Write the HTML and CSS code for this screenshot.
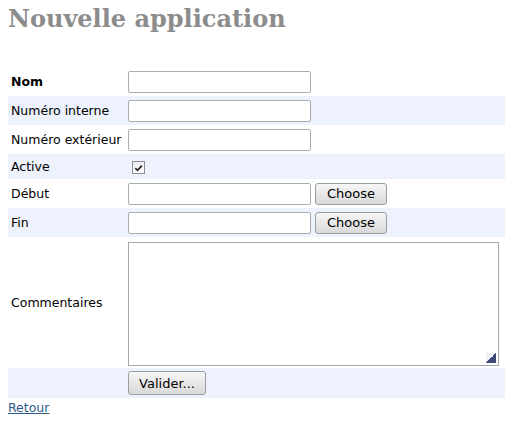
FILE: index.html
```html
<!DOCTYPE html>
<html lang="fr">
<head>
<meta charset="utf-8">
<title>Nouvelle application</title>
<link rel="stylesheet" href="styles.css">
</head>
<body>
<h1 class="title">Nouvelle application</h1>
<form class="form">
<table class="grid">
  <tr class="row">
    <td class="label strong">Nom</td>
    <td class="field"><input class="text" type="text"></td>
  </tr>
  <tr class="row alt">
    <td class="label">Numéro interne</td>
    <td class="field"><input class="text" type="text"></td>
  </tr>
  <tr class="row">
    <td class="label">Numéro extérieur</td>
    <td class="field"><input class="text" type="text"></td>
  </tr>
  <tr class="row alt">
    <td class="label">Active</td>
    <td class="field short"><span class="check"><svg viewBox="0 0 12 12" width="12" height="12"><path d="M2.5 6.2 L5 8.6 L9.6 3.4" fill="none" stroke="#222" stroke-width="1.8"/></svg></span></td>
  </tr>
  <tr class="row">
    <td class="label">Début</td>
    <td class="field"><input class="text" type="text"><button type="button" class="btn choose">Choose</button></td>
  </tr>
  <tr class="row alt">
    <td class="label">Fin</td>
    <td class="field"><input class="text" type="text"><button type="button" class="btn choose">Choose</button></td>
  </tr>
  <tr class="row">
    <td class="label">Commentaires</td>
    <td class="field tall"><div class="area"><span class="grip"></span></div></td>
  </tr>
  <tr class="row alt">
    <td class="label"></td>
    <td class="field"><button type="button" class="btn submit">Valider...</button></td>
  </tr>
</table>
</form>
<a class="back" href="#">Retour</a>
</body>
</html>
```
FILE: styles.css
```css
body {
  margin: 8px;
  font-family: "DejaVu Sans", Verdana, sans-serif;
  font-size: 12.5px;
  color: #000;
  background: #fff;
}
.title {
  margin: 0 0 37px 0;
  font-family: "DejaVu Serif", serif;
  font-weight: bold;
  font-size: 24px;
  line-height: 22px;
  color: #8c8c8c;
}
.form { margin: 0; }
.grid {
  border-collapse: collapse;
  width: 497px;
}
.row.alt { background: #edf2fc; }
.label {
  width: 117px;
  padding: 0 0 0 3px;
  white-space: nowrap;
  vertical-align: middle;
}
.strong { font-weight: bold; }
.field {
  padding: 3px 0 3px 0;
  vertical-align: middle;
  height: 23px;
}
.field.short { height: 19px; }
.field.tall { padding: 4px 0 2px 0; }
.text {
  box-sizing: border-box;
  width: 183px;
  height: 22px;
  margin: 0;
  border: 1px solid #a9adb2;
  border-radius: 2px;
  vertical-align: middle;
  background: #fff;
}
.check {
  display: inline-flex;
  align-items: center;
  justify-content: center;
  box-sizing: border-box;
  width: 13px;
  height: 13px;
  margin-left: 4px;
  border: 1px solid #8a8f96;
  background: linear-gradient(#eee, #fff);
  vertical-align: middle;
}
.check svg { display: block; }
.btn {
  box-sizing: border-box;
  height: 22px;
  padding: 0 6px;
  border: 1px solid #9a9ea3;
  border-radius: 3px;
  background: linear-gradient(#f6f6f6, #d9d9d9);
  font-family: "DejaVu Sans", Verdana, sans-serif;
  font-size: 13px;
  color: #000;
  vertical-align: middle;
}
.choose {
  width: 72px;
  margin-left: 4px;
}
.submit {
  width: 78px;
  height: 24px;
}
.area {
  position: relative;
  box-sizing: border-box;
  width: 371px;
  height: 124px;
  margin: 1px 0 0 0;
  border: 1px solid #a0a9ae;
  background: #fff;
}
.grip {
  position: absolute;
  right: 2px;
  bottom: 2px;
  width: 10px;
  height: 10px;
  background: linear-gradient(135deg, #eef0f6 50%, #3d4a78 50%);
}
.back {
  display: inline-block;
  margin-top: 2px;
  color: #2c5a8c;
}
```
